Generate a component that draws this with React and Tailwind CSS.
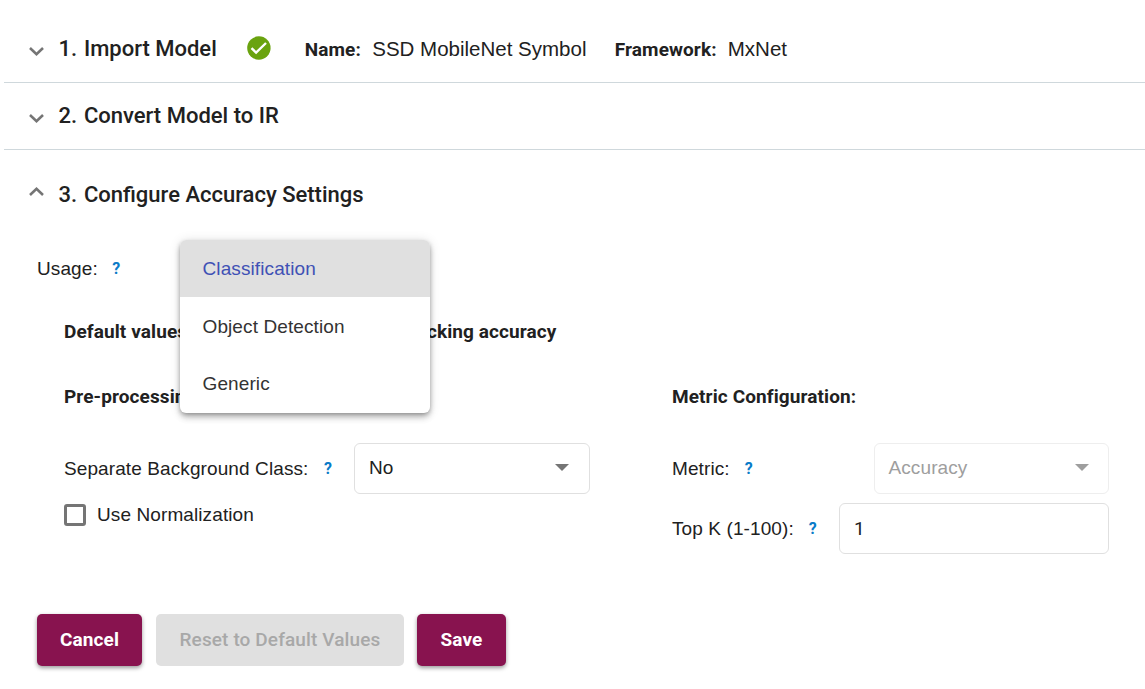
function Chevron({ up = false }) {
  return (
    <svg className="h-[9px] w-[15px] shrink-0" viewBox="0 0 15 9" fill="none" stroke="#757575" strokeWidth="2.6">
      <path d={up ? "M1 8L7.5 1.9L14 8" : "M1 1L7.5 7.1L14 1"} />
    </svg>
  );
}

function CheckCircle() {
  return (
    <svg className="mb-[2px] ml-[30px] mr-[34px] h-6 w-6 shrink-0" viewBox="0 0 24 24">
      <circle cx="11.9" cy="12" r="11.7" fill="#6aa30f" />
      <path d="M4.5 12.2L9.1 16.6L19 7" fill="none" stroke="#fff" strokeWidth="2.4" />
    </svg>
  );
}

function Help() {
  return <span className="font-['Roboto',sans-serif] text-base font-bold leading-none text-[#0a7bc8]">?</span>;
}

function Caret({ className }) {
  return (
    <svg className={`h-[7px] w-[14px] ${className}`} viewBox="0 0 14 7" fill="currentColor">
      <path d="M0 0H14L7 7Z" />
    </svg>
  );
}

function Bold({ className = "", children }) {
  return <span className={`font-['Roboto',sans-serif] font-bold tracking-[0.1px] ${className}`}>{children}</span>;
}

function Title({ step, children }) {
  return (
    <h2 className="ml-[14.5px] font-['Roboto',sans-serif] text-[22px] font-medium leading-7 tracking-normal">
      <span className="mr-[1.3px]">{step}. </span>
      {children}
    </h2>
  );
}

const options = ["Object Detection", "Generic"];

export default function App() {
  return (
    <div className="h-[689px] w-full overflow-hidden bg-white pl-1 font-['Liberation_Sans',sans-serif] text-[19px] leading-6 tracking-[0.1px] text-[#212121]">
      <header className="flex h-[83px] items-center border-b border-[#cfd8dc] pl-[25px] pt-4">
        <div className="pt-[5px]"><Chevron /></div>
        <Title step={1}>Import Model</Title>
        <CheckCircle />
        <Bold className="w-[67.5px] pt-px">Name:</Bold>
        <span className="w-[242.5px] text-[20.5px] tracking-normal">SSD MobileNet Symbol</span>
        <Bold className="w-[113px] pt-px">Framework:</Bold>
        <span className="text-[20.5px] tracking-normal">MxNet</span>
      </header>
      <header className="flex h-[67px] items-center border-b border-[#cfd8dc] pl-[25px]">
        <div className="pt-[5px]"><Chevron /></div>
        <Title step={2}>Convert Model to IR</Title>
      </header>
      <section>
        <header className="flex h-[90px] items-center pl-[25px]">
          <div className="pb-[7px]"><Chevron up /></div>
          <Title step={3}>Configure Accuracy Settings</Title>
        </header>
        <div className="relative flex h-14 items-center pl-[33px] pt-[2px]">
          <span className="mr-[14.5px]">Usage:</span>
          <Help />
          <ul className="absolute left-[176px] top-0 z-10 h-[173px] w-[250px] overflow-hidden rounded-[6px] bg-white text-[#333333] shadow-[0_2px_5px_-1px_rgba(0,0,0,0.35),0_5px_6px_0_rgba(0,0,0,0.16),0_1px_12px_0_rgba(0,0,0,0.12)]">
            <li className="flex h-[57px] items-center bg-[#e0e0e0] pl-[22.5px] text-[#3f51b5]">Classification</li>
            {options.map((o) => (
              <li key={o} className="flex h-[58px] items-center pl-[22.5px] nth-2:pt-[2px]">{o}</li>
            ))}
          </ul>
        </div>
        <p className="ml-[60px] mt-6 flex w-[492.5px] justify-between">
          <Bold>Default values</Bold>
          <Bold>for checking accuracy</Bold>
        </p>
        <div className="flex pl-[60px] pt-[41px]">
          <div className="w-[608px]">
            <Bold className="block">Pre-processing Configuration:</Bold>
            <div className="mt-[34px] flex h-[51px] items-center">
              <span className="w-[260px]">Separate Background Class:</span>
              <span className="w-[30px] pb-px"><Help /></span>
              <div className="flex h-[51px] w-[236px] items-center justify-between rounded-[6px] border border-[#e0e0e0] pl-[14px] pr-5 pb-[2px]">
                No<Caret className="text-[#757575]" />
              </div>
            </div>
            <label className="mt-[9px] flex items-center gap-[11px]">
              <span className="h-[22px] w-[22px] rounded-[3px] border-[3px] border-[#757575]" />
              Use Normalization
            </label>
          </div>
          <div className="w-[437px]">
            <Bold className="block">Metric Configuration:</Bold>
            <div className="mt-[34px] flex h-[51px] items-center">
              <span className="mr-[15px]">Metric:</span>
              <Help />
              <div className="ml-auto flex h-[51px] w-[235px] items-center justify-between rounded-[6px] border border-[#eeeeee] pl-[13.5px] pr-[19px] pb-[2px] text-[#9e9e9e]">
                Accuracy<Caret className="text-[#9e9e9e]" />
              </div>
            </div>
            <div className="mt-[9px] flex h-[51px] items-center">
              <span className="mr-[15px]">Top K (1-100):</span>
              <Help />
              <div className="ml-auto flex h-[51px] w-[270px] items-center rounded-[6px] border border-[#e0e0e0] pl-[14px] font-['Roboto',sans-serif]">1</div>
            </div>
          </div>
        </div>
        <footer className="mt-[60px] flex pl-[33px] font-['Roboto',sans-serif] font-medium tracking-[0.12px]">
          <button className="h-[52px] w-[105px] rounded-[5px] bg-[#88134f] font-bold text-white shadow-[0_2px_4px_rgba(0,0,0,0.4)]">Cancel</button>
          <button className="ml-[14px] h-[52px] w-[248px] rounded-[5px] bg-[#e0e0e0] text-[#a8a8a8]">Reset to Default Values</button>
          <button className="ml-[13px] h-[52px] w-[89px] rounded-[5px] bg-[#88134f] font-bold text-white shadow-[0_2px_4px_rgba(0,0,0,0.4)]">Save</button>
        </footer>
      </section>
    </div>
  );
}
